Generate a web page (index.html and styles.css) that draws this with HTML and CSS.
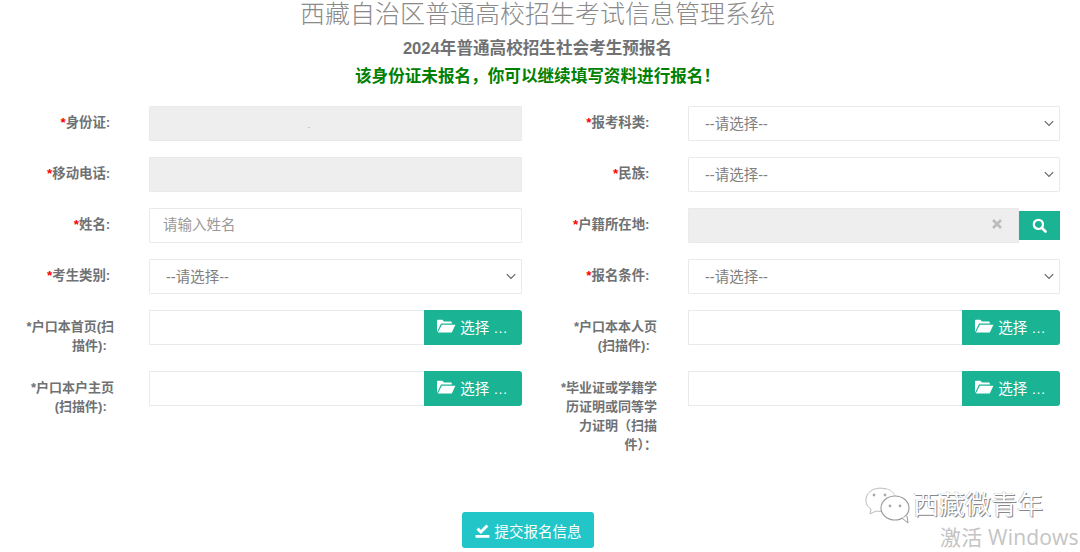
FILE: index.html
```html
<!DOCTYPE html>
<html lang="zh-CN">
<head>
<meta charset="utf-8">
<title>西藏自治区普通高校招生考试信息管理系统</title>
<link rel="stylesheet" href="styles.css">
</head>
<body>
<header class="head">
  <h1 class="title">西藏自治区普通高校招生考试信息管理系统</h1>
  <h2 class="subtitle">2024年普通高校招生社会考生预报名</h2>
  <h3 class="notice">该身份证未报名，你可以继续填写资料进行报名！</h3>
</header>
<form class="form">
  <label class="label left"><span class="req">*</span>身份证:&nbsp;</label>
  <div class="input locked dotted">.</div>
  <label class="label"><span class="req">*</span>报考科类:&nbsp;&nbsp;</label>
  <select class="select"><option>--请选择--</option></select>

  <label class="label left"><span class="req">*</span>移动电话:&nbsp;</label>
  <div class="input locked"></div>
  <label class="label"><span class="req">*</span>民族:&nbsp;&nbsp;</label>
  <select class="select"><option>--请选择--</option></select>

  <label class="label left"><span class="req">*</span>姓名:&nbsp;</label>
  <input class="input" type="text" placeholder="请输入姓名">
  <label class="label"><span class="req">*</span>户籍所在地:&nbsp;&nbsp;</label>
  <div class="picker">
    <div class="input locked clearable">
      <svg class="clear" viewBox="0 0 12 12" width="12" height="12"><path d="M2 2l8 8M10 2l-8 8" stroke="#bbb" stroke-width="2.6" fill="none"/></svg>
    </div>
    <button class="search" type="button">
      <svg viewBox="0 0 16 16" width="15" height="15"><circle cx="6.8" cy="6.8" r="4.9" fill="none" stroke="#fff" stroke-width="2.4"/><path d="M10.4 10.4l4 4" stroke="#fff" stroke-width="2.8" stroke-linecap="round"/></svg>
    </button>
  </div>

  <label class="label left"><span class="req">*</span>考生类别:&nbsp;</label>
  <select class="select"><option>--请选择--</option></select>
  <label class="label"><span class="req">*</span>报名条件:&nbsp;&nbsp;</label>
  <select class="select"><option>--请选择--</option></select>

  <label class="label left wrapped">*户口本首页(扫<br>描件):&nbsp;&nbsp;</label>
  <div class="file">
    <div class="input fname"></div>
    <button class="browse" type="button">
      <svg viewBox="0 0 20 16" width="20" height="16"><path d="M1 14V3c0-.8.5-1.3 1.3-1.3h4L8 3.4h6.6c.8 0 1.2.5 1.2 1.2v1H5L1 14z" fill="#fff"/><path d="M5.8 6.800H19.400L15.800 14.600H1.900z" fill="#fff"/></svg>
      <span>选择 …</span>
    </button>
  </div>
  <label class="label wrapped">*户口本本人页<br>(扫描件):&nbsp;&nbsp;</label>
  <div class="file">
    <div class="input fname"></div>
    <button class="browse" type="button">
      <svg viewBox="0 0 20 16" width="20" height="16"><path d="M1 14V3c0-.8.5-1.3 1.3-1.3h4L8 3.4h6.6c.8 0 1.2.5 1.2 1.2v1H5L1 14z" fill="#fff"/><path d="M5.8 6.800H19.400L15.800 14.600H1.900z" fill="#fff"/></svg>
      <span>选择 …</span>
    </button>
  </div>

  <label class="label left wrapped">*户口本户主页<br>(扫描件):&nbsp;&nbsp;</label>
  <div class="file">
    <div class="input fname"></div>
    <button class="browse" type="button">
      <svg viewBox="0 0 20 16" width="20" height="16"><path d="M1 14V3c0-.8.5-1.3 1.3-1.3h4L8 3.4h6.6c.8 0 1.2.5 1.2 1.2v1H5L1 14z" fill="#fff"/><path d="M5.8 6.800H19.400L15.800 14.600H1.900z" fill="#fff"/></svg>
      <span>选择 …</span>
    </button>
  </div>
  <label class="label wrapped">*毕业证或学籍学<br>历证明或同等学<br>力证明（扫描<br>件）：</label>
  <div class="file">
    <div class="input fname"></div>
    <button class="browse" type="button">
      <svg viewBox="0 0 20 16" width="20" height="16"><path d="M1 14V3c0-.8.5-1.3 1.3-1.3h4L8 3.4h6.6c.8 0 1.2.5 1.2 1.2v1H5L1 14z" fill="#fff"/><path d="M5.8 6.800H19.400L15.800 14.600H1.900z" fill="#fff"/></svg>
      <span>选择 …</span>
    </button>
  </div>
</form>
<div class="actions">
  <button class="submit" type="button">
    <svg viewBox="0 0 14 14" width="15" height="15"><path d="M1.4 6.200l1.900-1.900 2.200 2.200L10.600 1.400l1.900 1.900-7 7z" fill="#fff"/><rect x="0.5" y="11.200" width="13" height="2.600" fill="#fff"/></svg>
    <span>提交报名信息</span>
  </button>
</div>
<div class="watermark">
  <svg viewBox="0 0 46 40" width="46" height="40">
    <path d="M22 4C12 1 3 6 2 14c-.5 5 2 8 5 10l-1 5 6-3c2 .5 4 .5 5 .3" fill="#fff" stroke="#bbb" stroke-width="1"/>
    <path d="M21 3.500c6 1 10 5 10.500 9" fill="none" stroke="#ccc" stroke-width="1"/>
    <ellipse cx="31" cy="23" rx="14" ry="12" fill="#fff" stroke="#999" stroke-width="1.100"/>
    <path d="M38 33l6 5-1-7" fill="#fff" stroke="#999" stroke-width="1"/>
    <circle cx="10" cy="10" r="1.400" fill="#aaa"/><circle cx="21" cy="10" r="1.400" fill="#aaa"/>
    <circle cx="26" cy="21" r="1.400" fill="#aaa"/><circle cx="36" cy="21" r="1.400" fill="#aaa"/>
  </svg>
  <span class="wm-text">西藏微青年</span>
</div>
<div class="activate">激活 Windows</div>
</body>
</html>
```

FILE: styles.css
```css
* { box-sizing: border-box; }
html, body { margin: 0; height: 552px; overflow: hidden; background: #fff; }
body {
  position: relative;
  font-family: "Liberation Sans", "Noto Sans CJK SC", sans-serif;
  color: #676a6c;
  font-size: 14.5px;
}
.head { text-align: center; padding-right: 5px; }
.title {
  margin: 0;
  height: 28px;
  font-size: 25px;
  line-height: 28px;
  font-weight: 300;
  color: #8a8a8a;
}
.subtitle {
  margin: 10px 0 0;
  height: 22px;
  font-size: 16.6px;
  line-height: 22px;
  font-weight: 700;
  color: #6f7173;
}
.notice {
  margin: 6px 0 0;
  height: 22px;
  font-size: 16.6px;
  line-height: 22px;
  font-weight: 700;
  color: #008000;
}
.form {
  margin-top: 18px;
  display: grid;
  grid-template-columns: 118px 373px 104px 372px;
  column-gap: 31px;
  row-gap: 16px;
  align-items: start;
}
.label {
  display: block;
  padding-top: 7px;
  font-size: 13.4px;
  line-height: 19px;
  font-weight: 700;
  text-align: right;
  white-space: nowrap;
  color: #6f7173;
}
.wrapped { font-size: 13px; }
.left { padding-right: 4px; }
.req { color: #f00; }
.input {
  display: block;
  width: 100%;
  height: 35px;
  border: 1px solid #e9eaeb;
  background: #fff;
  padding: 0 13px 2px;
  font: inherit;
  color: #676a6c;
  outline: none;
  border-radius: 1px;
}
.input::placeholder { color: #999; opacity: 1; }
.locked { background: #eee; }
.dotted { padding: 0 0 0 158px; line-height: 38px; font-size: 7px; }
.select {
  display: block;
  width: 100%;
  height: 35px;
  border: 1px solid #e9eaeb;
  border-radius: 1px;
  appearance: none;
  background: #fff url("data:image/svg+xml,%3Csvg xmlns='http://www.w3.org/2000/svg' width='10' height='7'%3E%3Cpath d='M.8 1.200l4.200 4.200 4.200-4.200' fill='none' stroke='%23666' stroke-width='1.200'/%3E%3C/svg%3E") no-repeat right 5px center;
  padding: 0 20px 0 16px;
  font: inherit;
  color: #808080;
  outline: none;
}
.picker { display: flex; align-items: center; }
.clearable { flex: 1; display: flex; align-items: center; justify-content: flex-end; padding-right: 15px; padding-bottom: 3px; }
.search {
  width: 41px;
  height: 29px;
  border: 0;
  padding: 0;
  background: #1ab394;
  display: flex;
  align-items: center;
  justify-content: center;
}
.file { display: flex; }
.fname { flex: 1; border-right: 0; }
.browse {
  width: 98px;
  height: 35px;
  border: 0;
  padding: 0 2px 3px 0;
  background: #1ab394;
  color: #fff;
  font: inherit;
  border-radius: 0 3px 3px 0;
  display: flex;
  align-items: center;
  justify-content: center;
  gap: 4px;
}
.actions { display: flex; justify-content: center; margin-top: 58px; padding-right: 24px; }
.submit {
  width: 132px;
  height: 36px;
  border: 0;
  padding: 0;
  background: #23c6c8;
  color: #fff;
  font: inherit;
  border-radius: 3px;
  display: flex;
  align-items: center;
  justify-content: center;
  gap: 5px;
}
.watermark {
  position: absolute;
  left: 864px;
  top: 485px;
  display: flex;
  align-items: center;
  gap: 3px;
}
.wm-text {
  font-size: 26px;
  line-height: 40px;
  color: #fff;
  text-shadow: 1px 1px 0 #888, -0.5px -0.5px 0 #aaa;
}
.activate {
  position: absolute;
  left: 940px;
  top: 523px;
  white-space: nowrap;
  font-family: "Open Sans", "Noto Sans CJK SC", sans-serif;
  font-size: 21px;
  letter-spacing: 0.2px;
  line-height: 28px;
  color: #c4c4c4;
}
```
